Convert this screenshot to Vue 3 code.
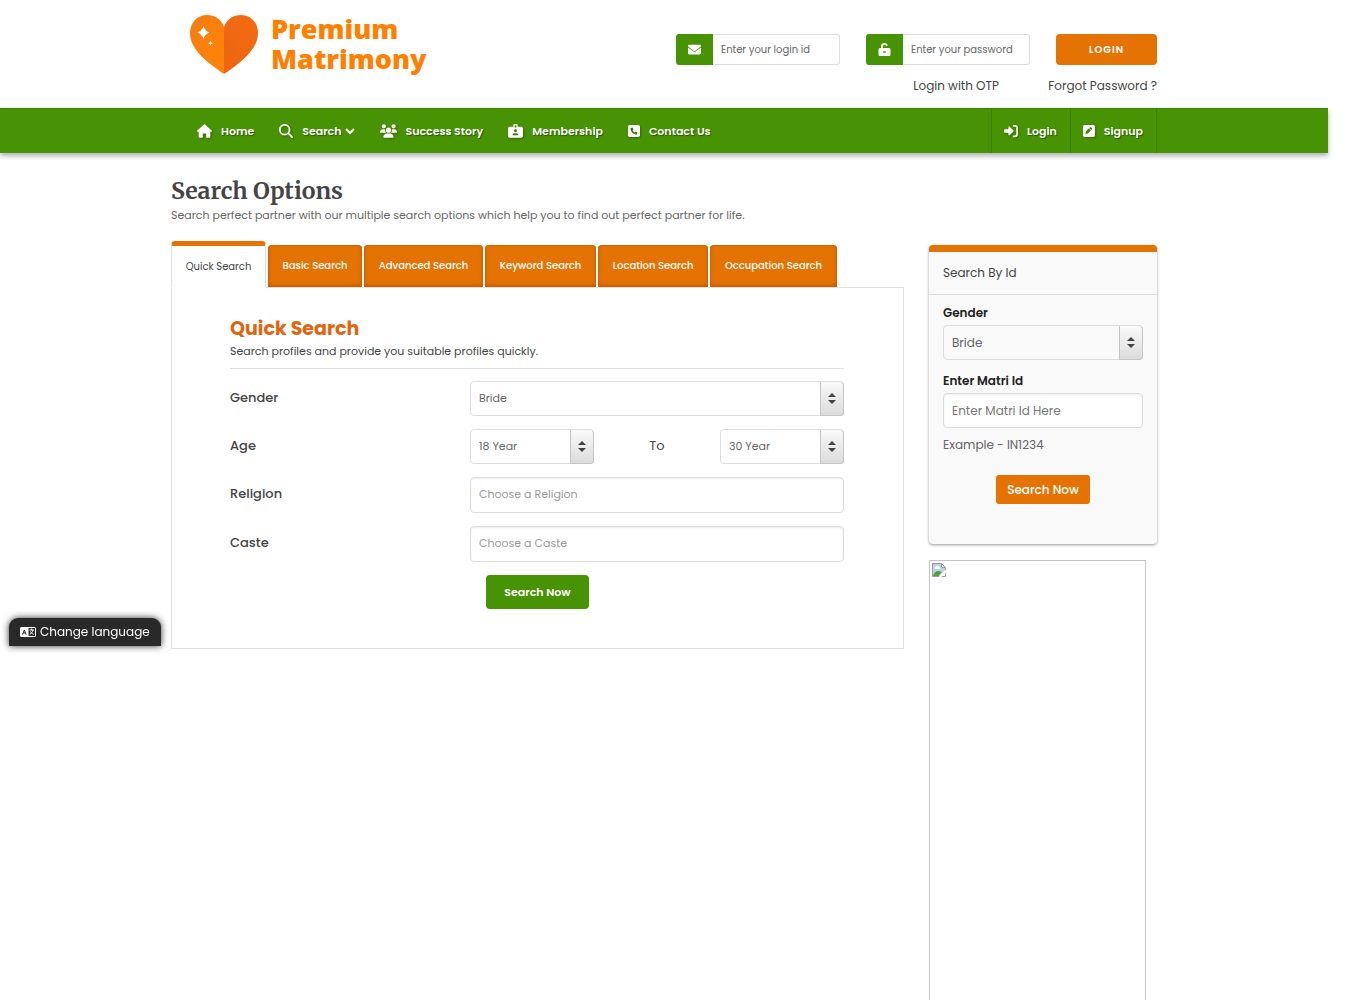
<template>
  <div class="page">
    <header class="container header">
      <a class="logo" href="#" aria-label="Premium Matrimony">
        <svg class="heart" viewBox="0 0 68 60">
          <defs>
            <linearGradient id="heart-left" x1="0" y1="0" x2="1" y2="1">
              <stop offset="0" stop-color="#f57c10" />
              <stop offset="1" stop-color="#ff8508" />
            </linearGradient>
            <linearGradient id="heart-right" x1="0" y1="1" x2="1" y2="0">
              <stop offset="0" stop-color="#ee6410" />
              <stop offset="1" stop-color="#f26c12" />
            </linearGradient>
          </defs>
          <path fill="url(#heart-left)" d="M34 13C31 5 25 1 17 1 7 1 0 9 0 19c0 17 18 30 34 41z" />
          <path fill="url(#heart-right)" d="M34 13C37 5 43 1 51 1c10 0 17 8 17 18 0 17-18 30-34 41z" />
          <path fill="#fff" d="M13.500 12q1.500 5 6 6.500-4.500 1.500-6 6.500-1.500-5-6-6.500 4.500-1.500 6-6.500zM20.500 27q.8 1.700 2.200 2.200-1.400.5-2.200 2.200-.8-1.700-2.200-2.200 1.400-.5 2.200-2.200z" />
        </svg>
        <span class="logo-text">Premium<br>Matrimony</span>
      </a>

      <form class="login" @submit.prevent>
        <div class="input-group">
          <label for="login-id" aria-label="Login id">
            <svg class="icon" viewBox="0 0 512 512"><path :d="icons.mail" /></svg>
          </label>
          <input id="login-id" type="text" placeholder="Enter your login id">
        </div>
        <div class="input-group">
          <label for="login-pass" aria-label="Password">
            <svg class="icon" viewBox="0 0 12 13">
              <path fill-rule="evenodd" d="M2.500 5V3.600a3.500 3.500 0 0 1 6.800-1.200l-1.700.6a1.700 1.700 0 0 0-3.300.6V5h6.200A1.500 1.500 0 0 1 12 6.500v5a1.500 1.500 0 0 1-1.500 1.500h-9A1.500 1.500 0 0 1 0 11.500v-5A1.500 1.500 0 0 1 1.500 5zm2.200 3.200v1.600h2.600V8.200z" />
            </svg>
          </label>
          <input id="login-pass" type="password" placeholder="Enter your password">
        </div>
        <button class="login-btn" type="submit">LOGIN</button>
        <a class="otp" href="#">Login with OTP</a>
        <a class="forgot" href="#">Forgot Password ?</a>
      </form>
    </header>

    <nav class="navbar">
      <div class="container nav-inner">
        <a v-for="item in menu" :key="item.label" class="nav-link" href="#">
          <svg class="icon" :viewBox="item.box" :style="{ width: item.w + 'px' }"><path fill-rule="evenodd" :d="icons[item.icon]" /></svg>
          <span>{{ item.label }}</span>
          <svg v-if="item.drop" class="chevron" viewBox="0 0 10 7"><path d="M1 1l4 4 4-4" /></svg>
        </a>
        <div class="nav-right">
          <a v-for="item in account" :key="item.label" class="nav-link boxed" href="#">
            <svg class="icon" :viewBox="item.box" :style="{ width: item.w + 'px' }"><path fill-rule="evenodd" :d="icons[item.icon]" /></svg>
            <span>{{ item.label }}</span>
          </a>
        </div>
      </div>
    </nav>

    <main class="container">
      <h1>Search Options</h1>
      <p class="intro">Search perfect partner with our multiple search options which help you to find out perfect partner for life.</p>

      <div class="columns">
        <section class="search">
          <div class="tabs" role="tablist">
            <button
              v-for="tab in tabs"
              :key="tab"
              role="tab"
              type="button"
              :class="['tab', { active: tab === activeTab }]"
              :aria-selected="tab === activeTab"
              @click="activeTab = tab"
            >{{ tab }}</button>
          </div>

          <form class="panel" @submit.prevent>
            <h2>{{ activeTab }}</h2>
            <p class="hint">Search profiles and provide you suitable profiles quickly.</p>

            <div class="row">
              <label for="gender">Gender</label>
              <div class="select">
                <select id="gender" v-model="gender"><option>Bride</option><option>Groom</option></select>
                <span class="arrows"><svg viewBox="0 0 8 11"><path d="M4 0l4 4H0zM4 11L0 7h8z" /></svg></span>
              </div>
            </div>
            <div class="row">
              <label for="age-from">Age</label>
              <div class="range">
                <div class="select">
                  <select id="age-from" v-model="ageFrom"><option v-for="n in ages" :key="n" :value="n">{{ n }} Year</option></select>
                  <span class="arrows"><svg viewBox="0 0 8 11"><path d="M4 0l4 4H0zM4 11L0 7h8z" /></svg></span>
                </div>
                <label class="to" for="age-to">To</label>
                <div class="select">
                  <select id="age-to" v-model="ageTo"><option v-for="n in ages" :key="n" :value="n">{{ n }} Year</option></select>
                  <span class="arrows"><svg viewBox="0 0 8 11"><path d="M4 0l4 4H0zM4 11L0 7h8z" /></svg></span>
                </div>
              </div>
            </div>
            <div class="row">
              <label for="religion">Religion</label>
              <input id="religion" class="field" type="text" placeholder="Choose a Religion">
            </div>
            <div class="row">
              <label for="caste">Caste</label>
              <input id="caste" class="field" type="text" placeholder="Choose a Caste">
            </div>
            <button class="search-btn" type="submit">Search Now</button>
          </form>
        </section>

        <aside class="side">
          <form class="card" @submit.prevent>
            <h3>Search By Id</h3>
            <div class="card-body">
              <label for="side-gender">Gender</label>
              <div class="select">
                <select id="side-gender" v-model="sideGender"><option>Bride</option><option>Groom</option></select>
                <span class="arrows"><svg viewBox="0 0 8 11"><path d="M4 0l4 4H0zM4 11L0 7h8z" /></svg></span>
              </div>
              <label for="matri-id">Enter Matri Id</label>
              <input id="matri-id" class="field" type="text" placeholder="Enter Matri Id Here">
              <p>Example - IN1234</p>
              <button class="id-btn" type="submit">Search Now</button>
            </div>
          </form>
          <div class="banner">
            <svg viewBox="0 0 16 16">
              <path fill="#fff" stroke="#9b9b9b" d="M1.500 1.500h9l4 4v9h-13z" />
              <path fill="#b9d0f5" d="M2 2h8v4h4v2l-6 6H2z" />
              <path fill="#fff" d="M4 7a1.500 1.500 0 0 1 1-2.500 2 2 0 0 1 3.500.5A1.300 1.300 0 0 1 8.500 7z" />
              <path fill="#4aa332" d="M2 14c1-3.500 3-5 5.500-5 1.500 0 2.500.6 3.200 1.500L7.500 14z" />
              <path fill="#fff" d="M16 7v2.500L9.500 16H6.500z" />
              <path fill="none" stroke="#9b9b9b" d="M10.500 1.500v4h4" />
            </svg>
          </div>
        </aside>
      </div>
    </main>

    <button class="language" type="button">
      <svg viewBox="0 0 16 10">
        <path fill="#fff" fill-rule="evenodd" d="M1.500 0h13A1.500 1.500 0 0 1 16 1.500v7a1.500 1.500 0 0 1-1.500 1.500h-13A1.500 1.500 0 0 1 0 8.500v-7A1.500 1.500 0 0 1 1.500 0zM8.500 1v8H15V1z" />
        <path fill="none" stroke="#292929" d="M2.500 7.500l1.800-4.500 1.800 4.500M3.200 6h2.200" />
        <path fill="none" stroke="#fff" d="M9.500 3h4.500M11.700 1.500V3M13 3c-.3 2-1.500 3.500-3.300 4.300M10.500 4.500c.6 1.300 1.600 2.300 3.200 2.800" />
      </svg>
      <span>Change language</span>
    </button>
  </div>
</template>

<script setup>
import { ref } from 'vue'

const icons = {
  mail: 'M48 64C21.500 64 0 85.500 0 112c0 15.100 7.100 29.300 19.200 38.400L236.800 313.600c11.400 8.500 27 8.500 38.400 0L492.800 150.400c12.100-9.100 19.200-23.300 19.200-38.400c0-26.500-21.500-48-48-48H48zM0 176V384c0 35.300 28.700 64 64 64H448c35.300 0 64-28.700 64-64V176L294.400 339.200c-22.800 17.100-54 17.100-76.800 0L0 176z',
  home: 'M576 256c0 18-15 32-32 32h-32v184c0 22-18 40-40 40h-80c-22 0-40-18-40-40v-88c0-18-14-32-32-32h-64c-18 0-32 14-32 32v88c0 22-18 40-40 40h-80c-22 0-40-18-40-40V288H32c-18 0-32-14-32-32 0-9 3-17 10-24L266 8c7-6 15-8 22-8s15 2 21 7l256 225c8 7 12 15 11 24z',
  search: 'M416 208c0 45.900-14.900 88.300-40 122.700L502.600 457.400c12.500 12.500 12.500 32.800 0 45.300s-32.800 12.500-45.300 0L330.700 376c-34.400 25.200-76.800 40-122.700 40C93.100 416 0 322.900 0 208S93.100 0 208 0S416 93.100 416 208zM208 352a144 144 0 1 0 0-288 144 144 0 1 0 0 288z',
  users: 'M144 0a80 80 0 1 1 0 160A80 80 0 1 1 144 0zM512 0a80 80 0 1 1 0 160A80 80 0 1 1 512 0zM0 298.700C0 239.800 47.800 192 106.700 192h42.700c15.900 0 31 3.500 44.600 9.700c-1.300 7.200-1.900 14.700-1.900 22.300c0 38.200 16.800 72.500 43.300 96H21.300C9.600 320 0 310.400 0 298.700zM405.300 320c26.600-23.500 43.300-57.800 43.300-96c0-7.600-.7-15-1.900-22.300c13.600-6.300 28.700-9.700 44.600-9.700h42.700C592.200 192 640 239.800 640 298.700c0 11.800-9.600 21.300-21.300 21.300H405.300zM224 224a96 96 0 1 1 192 0 96 96 0 1 1-192 0zM128 485.300C128 411.700 187.700 352 261.300 352H378.700C452.300 352 512 411.700 512 485.300c0 14.700-11.900 26.700-26.700 26.700H154.700c-14.700 0-26.700-11.900-26.700-26.700z',
  badge: 'M208 0h160v96h144c35 0 64 29 64 64v288c0 35-29 64-64 64H64c-35 0-64-29-64-64V160c0-35 29-64 64-64h144zM256 48v72h64V48zM288 192a56 56 0 1 0 0 112 56 56 0 1 0 0-112zM176 416h224c0-45-30-76-70-76h-84c-40 0-70 31-70 76z',
  phone: 'M64 32C28.700 32 0 60.700 0 96V416c0 35.300 28.700 64 64 64H384c35.300 0 64-28.700 64-64V96c0-35.300-28.700-64-64-64H64zm90.700 96.700c9.700-2.600 19.900 2.300 23.700 11.600l20 48c3.400 8.200 1 17.600-5.800 23.200L168 231.700c16.600 35.200 45.100 63.700 80.300 80.300l20.200-24.700c5.600-6.800 15-9.200 23.200-5.800l48 20c9.300 3.900 14.200 14 11.600 23.700l-12 44C336.900 378 329 384 320 384C196.300 384 96 283.700 96 160c0-9 6-16.900 14.700-19.300l44-12z',
  login: 'M217.900 105.900L340.700 228.700c7.200 7.200 11.300 17.100 11.300 27.300s-4.100 20.100-11.300 27.300L217.900 406.100c-6.400 6.400-15 9.900-24 9.900c-18.700 0-33.900-15.200-33.900-33.900V320H32c-17.700 0-32-14.300-32-32v-64c0-17.700 14.300-32 32-32h128v-62.100c0-18.700 15.200-33.900 33.900-33.900c9 0 17.600 3.600 24 9.900zM352 416h64c17.700 0 32-14.300 32-32V128c0-17.700-14.300-32-32-32h-64c-17.700 0-32-14.300-32-32s14.300-32 32-32h64c53 0 96 43 96 96v256c0 53-43 96-96 96h-64c-17.700 0-32-14.300-32-32s14.300-32 32-32z',
  edit: 'M64 32C29 32 0 61 0 96v320c0 35 29 64 64 64h320c35 0 64-29 64-64V96c0-35-29-64-64-64zM326 146c16 16 16 41 0 57l-18 18-71-71 18-18c16-16 41-16 57 0zM119 268l102-102 71 71-102 102c-4 4-9 7-15 8l-60 15c-5 1-11 0-15-4s-6-10-4-15l15-60c1-6 4-11 8-15z',
}

const menu = [
  { label: 'Home', icon: 'home', box: '0 0 576 512', w: 15 },
  { label: 'Search', icon: 'search', box: '0 0 512 512', w: 14, drop: true },
  { label: 'Success Story', icon: 'users', box: '0 0 640 512', w: 17 },
  { label: 'Membership', icon: 'badge', box: '0 0 576 512', w: 15 },
  { label: 'Contact Us', icon: 'phone', box: '0 0 448 512', w: 12 },
]

const account = [
  { label: 'Login', icon: 'login', box: '0 0 512 512', w: 14 },
  { label: 'Signup', icon: 'edit', box: '0 0 448 512', w: 12 },
]

const tabs = ['Quick Search', 'Basic Search', 'Advanced Search', 'Keyword Search', 'Location Search', 'Occupation Search']
const activeTab = ref('Quick Search')

const ages = Array.from({ length: 43 }, (_, i) => i + 18)
const gender = ref('Bride')
const ageFrom = ref(18)
const ageTo = ref(30)
const sideGender = ref('Bride')
</script>

<style>
body { margin: 0; background: #fff; }
</style>

<style scoped>
* { box-sizing: border-box; }

.page {
  height: 100vh;
  overflow: hidden;
  padding-right: 38px;
  font-family: Poppins, Inter, "Liberation Sans", sans-serif;
  font-size: 12px;
  color: #444;
}
.container { max-width: 986px; margin: 0 auto; }
a { color: inherit; text-decoration: none; }
h1, h2, h3, p { margin: 0; }
button, input, select { font-family: inherit; }
button { border: none; cursor: pointer; }
.icon { display: block; fill: currentColor; }

.header {
  height: 108px;
  display: flex;
  justify-content: space-between;
  align-items: flex-start;
}
.logo { display: flex; align-items: flex-start; gap: 13px; padding: 14px 0 0 19px; }
.heart { width: 68px; height: 60px; }
.logo-text {
  font-family: "Open Sans", "Noto Sans", sans-serif;
  font-size: 27px;
  font-weight: 800;
  line-height: 30px;
  color: #ff8000;
}

.login {
  display: grid;
  grid-template-columns: 164px 164px 101px;
  column-gap: 26px;
  row-gap: 12px;
  padding-top: 34px;
}
.input-group { display: flex; height: 31px; }
.input-group label {
  width: 37px;
  flex: none;
  display: flex;
  align-items: center;
  justify-content: center;
  background: #489303;
  color: #fff;
  border-radius: 3px 0 0 3px;
}
.input-group .icon { width: 13px; height: 13px; }
.input-group input {
  flex: 1;
  min-width: 0;
  padding: 0 8px;
  border: 1px solid #ddd;
  border-left: none;
  border-radius: 0 3px 3px 0;
  font-size: 10px;
  outline: none;
}
.input-group input::placeholder { color: #666; }
.login-btn {
  border-radius: 4px;
  background: #e57303;
  color: #fff;
  font-size: 10px;
  font-weight: 600;
  letter-spacing: 1px;
}
.otp, .forgot { line-height: 18px; white-space: nowrap; justify-self: end; }
.otp { grid-column: 2; padding-right: 31px; }

.navbar {
  background: #489303;
  border-top: 1px solid #3f8502;
  box-shadow: 0 3px 5px rgba(0, 0, 0, 0.3);
}
.nav-inner { display: flex; height: 44px; gap: 25px; padding-left: 26px; }
.nav-link {
  display: flex;
  align-items: center;
  gap: 9px;
  color: #fff;
  font-size: 11px;
  font-weight: 600;
  text-shadow: 1px 1px 1px rgba(0, 0, 0, 0.4);
}
.nav-link .icon { height: 14px; filter: drop-shadow(1px 1px 1px rgba(0, 0, 0, 0.3)); }
.chevron { width: 10px; height: 7px; margin-left: -6px; fill: none; stroke: #fff; stroke-width: 2; }
.nav-right { display: flex; margin-left: auto; border-left: 1px solid #3c7e02; }
.boxed { padding: 0 13px 0 12px; border-right: 1px solid #3c7e02; }

main { padding-top: 24px; }
h1 {
  font-family: Merriweather, "DejaVu Serif Condensed", "DejaVu Serif", serif;
  font-size: 23px;
  line-height: 28px;
  font-weight: 700;
}
.intro { font-size: 11px; line-height: 20px; color: #666; }

.columns { display: flex; justify-content: space-between; margin-top: 16px; }
.search { width: 733px; }
.tabs {
  display: grid;
  grid-template-columns: 95px 94px 119px 111px 110px 127px;
  gap: 2px;
  align-items: end;
}
.tab {
  height: 42px;
  padding: 0;
  border-radius: 4px 4px 0 0;
  background: #e57303;
  box-shadow: inset 0 0 2px #c65300, inset 0 -2px 4px rgba(150, 60, 0, 0.4);
  color: #fff;
  font-size: 10px;
  font-weight: 500;
  white-space: nowrap;
}
.tab.active {
  height: 46px;
  border: 1px solid #e0e0e0;
  border-top: 5px solid #e57303;
  border-bottom: none;
  background: #fff;
  box-shadow: 0 1px 0 #fff;
  color: #444;
  font-weight: 400;
}
.panel { padding: 29px 59px 39px 58px; border: 1px solid #e0e0e0; }
h2 { font-size: 19px; line-height: 24px; font-weight: 700; color: #e2650d; }
.hint {
  padding-bottom: 7px;
  margin-bottom: 12px;
  border-bottom: 1px solid #e0e0e0;
  font-size: 11px;
  line-height: 20px;
}
.row {
  display: grid;
  grid-template-columns: 240px 1fr;
  margin-bottom: 13px;
}
.row label { font-size: 13px; line-height: 34px; font-weight: 500; }
.row .to { font-weight: 400; }
.range { display: flex; justify-content: space-between; }
.range .select { width: 124px; }

.select { position: relative; height: 35px; }
.select select, .field {
  width: 100%;
  height: 35px;
  padding: 0 8px;
  border: 1px solid #ddd;
  border-radius: 4px;
  background: transparent;
  color: #666;
  font-size: 12px;
  outline: none;
}
.select select { appearance: none; }
.field { height: 36px; background: #fff; box-shadow: inset 0 1px 2px rgba(0, 0, 0, 0.08); }
.row .field::placeholder { color: #999; }
.row select, .row .field { padding-bottom: 2px; font-size: 11px; }
.card .field { height: 35px; }
.arrows {
  position: absolute;
  top: 1px;
  right: 0;
  bottom: 0;
  width: 24px;
  display: flex;
  align-items: center;
  justify-content: center;
  border: 1px solid #c5c5c5;
  border-top: none;
  border-radius: 0 4px 4px 0;
  background: linear-gradient(#fafafa, #dcdcdc);
  pointer-events: none;
}
.arrows svg { width: 8px; height: 11px; fill: #444; }
.search-btn {
  display: block;
  width: 103px;
  height: 34px;
  margin-left: 256px;
  border-radius: 4px;
  background: #489303;
  color: #fff;
  font-size: 11px;
  font-weight: 600;
}

.side { width: 228px; margin-top: 4px; }
.card {
  height: 299px;
  border-top: 7px solid #e57303;
  border-radius: 4px;
  background: #f9f9f9;
  box-shadow: 0 1px 3px rgba(0, 0, 0, 0.4);
}
h3 {
  padding-left: 14px;
  border-bottom: 1px solid #ddd;
  font-size: 12px;
  line-height: 42px;
  font-weight: 400;
}
.card-body { padding: 8px 14px 0 14px; }
.card-body label { display: block; line-height: 20px; font-weight: 600; color: #222; margin-bottom: 2px; }
.card-body .select { margin-bottom: 11px; }
.card-body .field::placeholder { color: #777; }
.card-body p { margin: 7px 0 20px; line-height: 20px; color: #666; }
.id-btn {
  display: block;
  width: 94px;
  height: 29px;
  margin: 0 auto;
  padding: 0;
  border-radius: 3px;
  background: #e57303;
  color: #fff;
  font-size: 12px;
  font-weight: 500;
}
.banner {
  width: 217px;
  height: 600px;
  margin-top: 16px;
  padding: 1px;
  border: 1px solid #c5c5c5;
}
.banner svg { width: 16px; height: 16px; }

.language {
  position: fixed;
  left: 9px;
  top: 618px;
  display: flex;
  align-items: center;
  gap: 4px;
  height: 28px;
  padding: 0 11px;
  border-radius: 9px 9px 0 0;
  background: #292929;
  box-shadow: 0 0 7px rgba(0, 0, 0, 0.8);
  color: #fff;
  font-size: 12px;
}
.language svg { width: 16px; height: 10px; }
</style>
